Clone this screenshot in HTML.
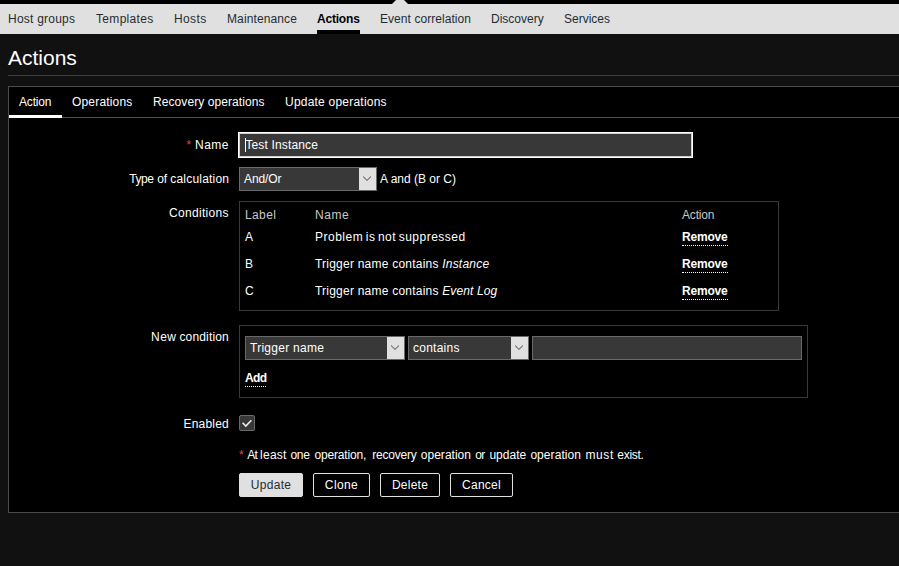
<!DOCTYPE html>
<html lang="en">
<head>
<meta charset="utf-8">
<title>Configuration of actions</title>
<style>
html,body{margin:0;padding:0;}
body{width:899px;height:566px;overflow:hidden;background:#111111;color:#ffffff;
  font-family:"Liberation Sans",Arial,sans-serif;font-size:12px;line-height:14px;position:relative;}
.abs{position:absolute;}
.t{position:absolute;white-space:nowrap;line-height:14px;height:14px;}
.r{text-align:right;}
/* top */
#topblack{left:0;top:0;width:899px;height:4px;background:#000;}
#subnav{left:0;top:4px;width:899px;height:30px;background:#e0e0e0;}
#pointer{left:392px;top:-4px;width:0;height:0;border-left:8px solid transparent;border-right:8px solid transparent;border-bottom:8px solid #e0e0e0;}
.nav{color:#1f2c33;top:12px;}
.nav.cur{color:#000;font-weight:bold;}
#navsel{left:317px;top:30px;width:43px;height:4px;background:#000;}
h1{position:absolute;margin:0;left:8px;top:46px;font-size:21px;line-height:24px;font-weight:normal;color:#fff;white-space:nowrap;}
#hline{left:8px;top:75px;width:891px;height:1px;background:#3d3d3d;}
#panel{left:8px;top:86px;width:900px;height:425px;background:#000;border:1px solid #4b4b4b;}
#tabline{left:9px;top:117px;width:890px;height:1px;background:#4f4f4f;}
#tabsel{left:9px;top:115px;width:53px;height:3px;background:#fff;}
.tab{top:95px;color:#fff;}
.red{color:#f43c3c;}
.box{border:1px solid #393939;box-sizing:border-box;}
.th{color:#c8c8c8;}
.lnk{font-weight:bold;letter-spacing:-0.2px;border-bottom:1px dotted #fff;height:15px;}
.inp{box-sizing:border-box;background:#383838;border:1px solid #696969;}
.sel{box-sizing:border-box;background:#383838;border:1px solid #696969;height:24px;}
.sel .arrow{position:absolute;right:0;top:0;width:17px;height:22px;background:#e0e0e0;}
.sel .arrow svg{position:absolute;left:0;top:0;}
.sel span{position:absolute;left:4px;top:4px;line-height:14px;white-space:nowrap;}
.btn{box-sizing:border-box;height:24px;border:1px solid #e0e0e0;border-radius:2px;text-align:center;line-height:22px;color:#fff;top:473px;}
.btn.main{background:#e0e0e0;color:#1f2c33;}
</style>
</head>
<body>
<div class="abs" id="topblack"></div>
<div class="abs" id="subnav"></div>
<div class="abs" id="pointer"></div>

<div class="t nav" style="left:8px;letter-spacing:0.23px">Host groups</div>
<div class="t nav" style="left:96px;letter-spacing:0.32px">Templates</div>
<div class="t nav" style="left:174px;letter-spacing:0.37px">Hosts</div>
<div class="t nav" style="left:227px;letter-spacing:0.12px">Maintenance</div>
<div class="t nav cur" style="left:317px;letter-spacing:-0.2px">Actions</div>
<div class="t nav" style="left:380px;letter-spacing:0.06px">Event correlation</div>
<div class="t nav" style="left:491px">Discovery</div>
<div class="t nav" style="left:564px">Services</div>
<div class="abs" id="navsel"></div>

<h1>Actions</h1>
<div class="abs" id="hline"></div>

<div class="abs" id="panel"></div>
<div class="abs" id="tabline"></div>
<div class="abs" id="tabsel"></div>
<div class="t tab" style="left:19px;letter-spacing:-0.18px">Action</div>
<div class="t tab" style="left:72px;letter-spacing:0.18px">Operations</div>
<div class="t tab" style="left:153px;letter-spacing:0.08px">Recovery operations</div>
<div class="t tab" style="left:285px;letter-spacing:0.22px">Update operations</div>

<!-- Name -->
<div class="t red" style="left:186.4px;top:138px">*</div><div class="t" style="left:195.1px;top:138px;letter-spacing:0.45px">Name</div>
<div class="abs" id="nameinp" style="left:239px;top:133px;width:453px;height:24px;box-sizing:border-box;background:#383838;border:1px solid #cfcfcf;box-shadow:0 0 0 1px #fff;"></div>
<div class="abs" style="left:245px;top:138px;width:1px;height:14px;background:#fff;"></div>
<div class="t" style="left:245.4px;top:138px;letter-spacing:0.15px">Test Instance</div>

<!-- Type of calculation -->
<div class="t" id="x0" style="left:129.2px;letter-spacing:-0.4px;top:172px">Type</div><div class="t" id="x1" style="left:157.2px;top:172px">of</div><div class="t" id="x2" style="left:170.3px;letter-spacing:0.2px;top:172px">calculation</div>
<div class="abs sel" style="left:239px;top:167px;width:138px;"><span style="letter-spacing:-0.12px">And/Or</span><div class="arrow"><svg width="17" height="22" viewBox="0 0 17 22"><path d="M4.1 8.6 L8 12.4 L11.9 8.6" fill="none" stroke="#383838" stroke-width="0.95"/></svg></div></div>
<div class="t" style="left:380px;top:172px">A and (B or C)</div>

<!-- Conditions -->
<div class="t r" style="left:28.8px;width:200px;top:206px;letter-spacing:0.3px">Conditions</div>
<div class="abs box" style="left:239px;top:201px;width:540px;height:110px;"></div>
<div class="t th" style="left:245px;top:208px;letter-spacing:0.37px">Label</div>
<div class="t th" style="left:315px;top:208px;letter-spacing:0.55px">Name</div>
<div class="t th" style="left:682px;top:208px;letter-spacing:-0.17px">Action</div>

<div class="t" style="left:245px;top:230px">A</div>
<div class="t" style="left:315px;top:230px;letter-spacing:0.5px;word-spacing:-1.3px">Problem is not suppressed</div>
<div class="t lnk" style="left:682px;top:230px">Remove</div>

<div class="t" style="left:245px;top:257px">B</div>
<div class="t" style="left:315px;top:257px;letter-spacing:0.225px">Trigger name contains <i style="letter-spacing:0.21px">Instance</i></div>
<div class="t lnk" style="left:682px;top:257px">Remove</div>

<div class="t" style="left:245px;top:284px">C</div>
<div class="t" style="left:315px;top:284px;letter-spacing:0.225px">Trigger name contains <i style="letter-spacing:0.11px">Event Log</i></div>
<div class="t lnk" style="left:682px;top:284px">Remove</div>

<!-- New condition -->
<div class="t" id="x3" style="left:151.1px;letter-spacing:0.4px;top:330px">New</div><div class="t" id="x4" style="left:179.45px;letter-spacing:0.16px;top:330px">condition</div>
<div class="abs box" style="left:239px;top:325px;width:569px;height:73px;"></div>
<div class="abs sel" style="left:245px;top:336px;width:160px;"><span style="letter-spacing:0.27px">Trigger name</span><div class="arrow"><svg width="17" height="22" viewBox="0 0 17 22"><path d="M4.1 8.6 L8 12.4 L11.9 8.6" fill="none" stroke="#383838" stroke-width="0.95"/></svg></div></div>
<div class="abs sel" style="left:408px;top:336px;width:121px;"><span style="letter-spacing:0.24px">contains</span><div class="arrow"><svg width="17" height="22" viewBox="0 0 17 22"><path d="M4.1 8.6 L8 12.4 L11.9 8.6" fill="none" stroke="#383838" stroke-width="0.95"/></svg></div></div>
<div class="abs inp" style="left:532px;top:336px;width:270px;height:24px;"></div>
<div class="t lnk" style="left:245px;top:371px;letter-spacing:-0.65px">Add</div>

<!-- Enabled -->
<div class="t r" style="left:29px;width:200px;top:417px;letter-spacing:0.22px">Enabled</div>
<div class="abs" style="left:239px;top:415px;width:16px;height:16px;box-sizing:border-box;background:#383838;border:1px solid #696969;border-radius:2px;">
<svg width="14" height="14" viewBox="0 0 14 14" style="position:absolute;left:0;top:0"><path d="M2.6 6.8 L5.8 10 L11.4 4.3" fill="none" stroke="#eee" stroke-width="1.6"/></svg></div>

<div class="t red" style="left:239px;top:448px">*</div><!--MSG--><div class="t w" id="w0" style="left:247.3px;letter-spacing:-0.9px;top:448px">At</div><div class="t w" id="w1" style="left:260.07px;letter-spacing:0.260px;top:448px;">least</div><div class="t w" id="w2" style="left:290.57px;letter-spacing:-0.382px;top:448px;">one</div><div class="t w" id="w3" style="left:314.57px;letter-spacing:-0.178px;top:448px;">operation,</div><div class="t w" id="w4" style="left:372.33px;letter-spacing:-0.228px;top:448px;">recovery</div><div class="t w" id="w5" style="left:420.81px;letter-spacing:0.018px;top:448px;">operation</div><div class="t w" id="w6" style="left:475.2px;letter-spacing:-0.5px;top:448px">or</div><div class="t w" id="w7" style="left:489.44px;letter-spacing:0.012px;top:448px;">update</div><div class="t w" id="w8" style="left:530.38px;letter-spacing:0.068px;top:448px;">operation</div><div class="t w" id="w9" style="left:585.50px;letter-spacing:0.570px;top:448px;">must</div><div class="t w" id="w10" style="left:617.33px;letter-spacing:-0.295px;top:448px;">exist.</div><!--/MSG-->

<div class="abs btn main" style="left:239px;width:64px;letter-spacing:0.34px;">Update</div>
<div class="abs btn" style="left:313px;width:57px;letter-spacing:0.4px;">Clone</div>
<div class="abs btn" style="left:380px;width:60px;letter-spacing:0.26px;">Delete</div>
<div class="abs btn" style="left:450px;width:63px;letter-spacing:0.26px;">Cancel</div>
</body>
</html>
